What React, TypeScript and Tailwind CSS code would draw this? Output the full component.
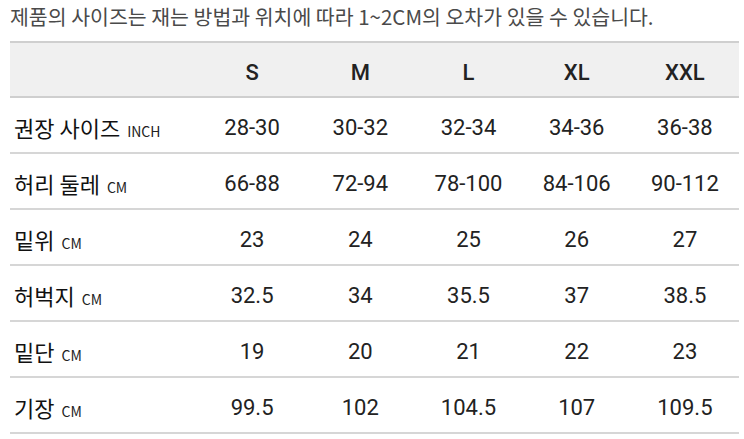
import * as React from 'react';

const sizes = ['S', 'M', 'L', 'XL', 'XXL'];

const rows: { label: string; unit: string; values: string[] }[] = [
  { label: '권장 사이즈', unit: 'INCH', values: ['28-30', '30-32', '32-34', '34-36', '36-38'] },
  { label: '허리 둘레', unit: 'CM', values: ['66-88', '72-94', '78-100', '84-106', '90-112'] },
  { label: '밑위', unit: 'CM', values: ['23', '24', '25', '26', '27'] },
  { label: '허벅지', unit: 'CM', values: ['32.5', '34', '35.5', '37', '38.5'] },
  { label: '밑단', unit: 'CM', values: ['19', '20', '21', '22', '23'] },
  { label: '기장', unit: 'CM', values: ['99.5', '102', '104.5', '107', '109.5'] },
];

export default function App() {
  return (
    <div className="h-[439px] w-[744px] overflow-hidden bg-white px-[10px] font-['Roboto','Noto_Sans_CJK_KR',sans-serif] text-[#222]">
      <div className="h-[41px] pt-[1px] font-['Noto_Sans_CJK_KR',sans-serif] text-[20.5px] leading-[30px] text-[#4a4a4a]">
        제품의 사이즈는 재는 방법과 위치에 따라 1~2CM의 오차가 있을 수 있습니다.
      </div>

      <div className="w-[729px]">
        {/* header */}
        <div className="grid h-[57px] grid-cols-[188px_repeat(5,1fr)] items-center border-y-2 border-[#cfcfcf] bg-[#f0f0f0] pt-[5px] text-[22px] font-medium">
          <div />
          {sizes.map((s) => (
            <div key={s} className="text-center">{s}</div>
          ))}
        </div>

        {rows.map((r) => (
          <div
            key={r.label}
            className="grid h-[56px] grid-cols-[188px_repeat(5,1fr)] items-center border-b-2 border-[#d6d6d6] pt-[4px] text-[22px]"
          >
            <div className="flex items-baseline gap-[7px] pl-[4px] font-['Noto_Sans_CJK_KR',sans-serif]">
              <span className="text-[22px] text-[#111]">{r.label}</span>
              <span className="text-[14px] text-[#222]">{r.unit}</span>
            </div>
            {r.values.map((v, i) => (
              <div key={i} className="text-center">{v}</div>
            ))}
          </div>
        ))}
      </div>
    </div>
  );
}
